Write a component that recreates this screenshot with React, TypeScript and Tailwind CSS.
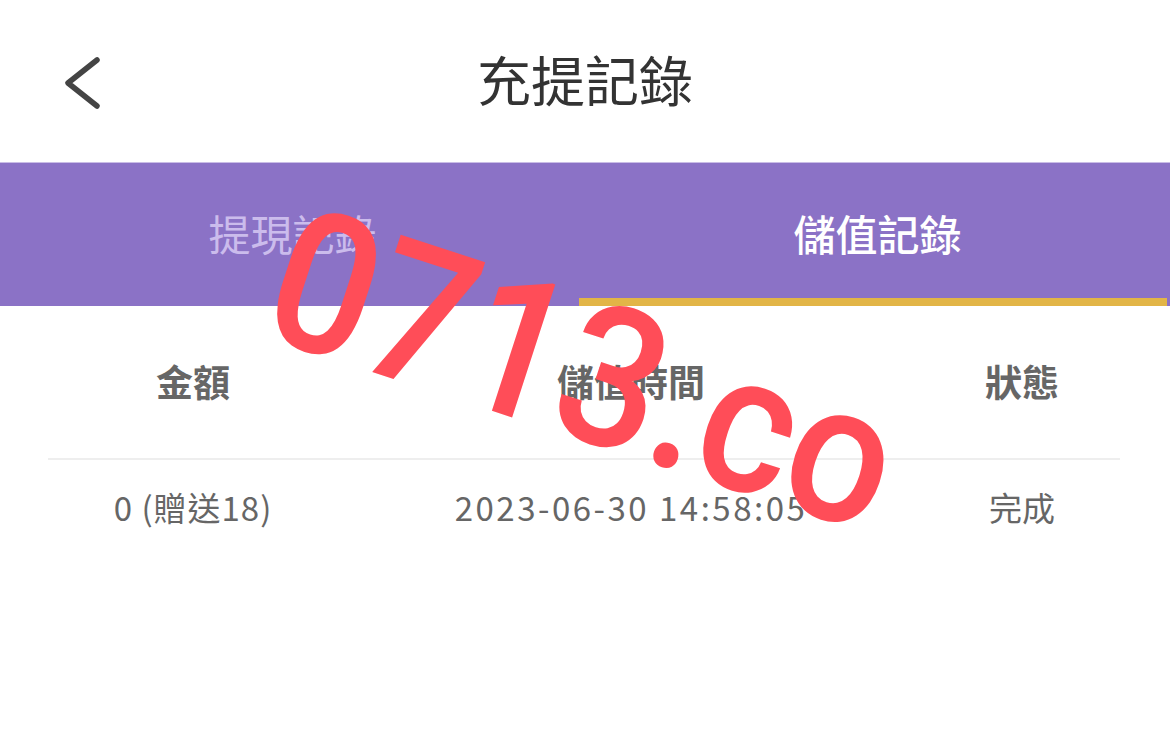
export default function App() {
  return (
    <div className="relative w-[1170px] h-[735px] overflow-hidden bg-white font-['Noto_Sans_CJK_TC','Noto_Sans_CJK_SC',sans-serif]">
      {/* header */}
      <div className="flex h-[162px] items-center">
        <div className="w-[160px] pl-[62px]">
          <svg width="44" height="60" viewBox="0 0 44 60" fill="none">
            <polyline points="35,9 6,32 35,55" stroke="#444" strokeWidth="5.5" strokeLinecap="round" strokeLinejoin="round" />
          </svg>
        </div>
        <h1 className="flex-1 text-center text-[54px] leading-none text-[#333] pb-[4px]">充提記錄</h1>
        <div className="w-[160px]" />
      </div>

      {/* tabs */}
      <div className="flex h-[144px] bg-[#8b72c6] border-t border-[#c9bde6]">
        <div className="flex flex-1 flex-col">
          <div className="flex flex-1 items-center justify-center pt-[4px] text-[42px] text-[#cbbcec]">提現記錄</div>
          <div className="h-[8px]" />
        </div>
        <div className="flex flex-1 flex-col">
          <div className="flex flex-1 items-center justify-center pt-[4px] text-[42px] font-medium text-white">儲值記錄</div>
          <div className="mr-[3px] ml-[-6px] h-[8px] bg-[#e2b547]" />
        </div>
      </div>

      {/* table */}
      <div className="mx-[48px] mr-[50px]">
        <div className="grid h-[152px] grid-cols-[290px_586px_196px] items-center text-center text-[37px] font-bold text-[#666]">
          <div>金額</div>
          <div>儲值時間</div>
          <div>狀態</div>
        </div>
        <div className="h-[2px] bg-[#eeeeee]" />
        <div className="grid h-[96px] grid-cols-[290px_586px_196px] items-center text-center text-[33px] text-[#666]">
          <div className="tracking-[1px]">0 (贈送18)</div>
          <div className="tracking-[2.5px]">2023-06-30 14:58:05</div>
          <div>完成</div>
        </div>
      </div>

      {/* watermark */}
      <div className="pointer-events-none absolute left-[583px] top-[370px] -translate-x-1/2 -translate-y-1/2 rotate-[18deg] scale-x-[0.92] whitespace-nowrap font-['Roboto',sans-serif] text-[196px] font-medium leading-none tracking-[-2px] text-[#ff4d58]">
        0713.co
      </div>
    </div>
  );
}
